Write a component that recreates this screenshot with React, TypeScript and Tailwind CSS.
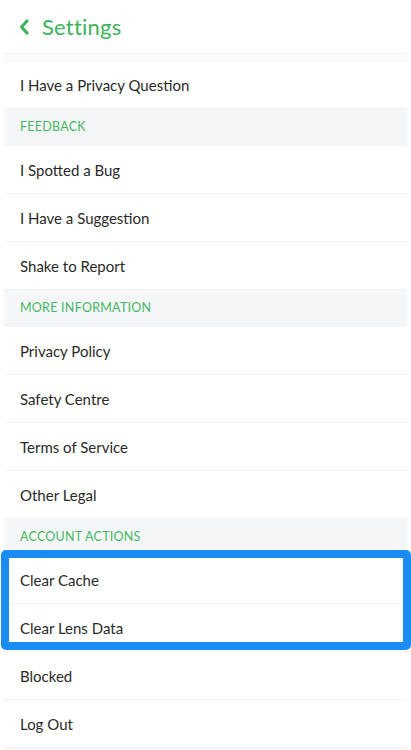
import React from 'react';

type Row = { kind: 'item' | 'section'; label: string };

const rows: Row[] = [
  { kind: 'item', label: 'I Have a Privacy Question' },
  { kind: 'section', label: 'FEEDBACK' },
  { kind: 'item', label: 'I Spotted a Bug' },
  { kind: 'item', label: 'I Have a Suggestion' },
  { kind: 'item', label: 'Shake to Report' },
  { kind: 'section', label: 'MORE INFORMATION' },
  { kind: 'item', label: 'Privacy Policy' },
  { kind: 'item', label: 'Safety Centre' },
  { kind: 'item', label: 'Terms of Service' },
  { kind: 'item', label: 'Other Legal' },
  { kind: 'section', label: 'ACCOUNT ACTIONS' },
];

function Item({ label }: { label: string }) {
  return (
    <div className="flex h-12 items-center border-b border-[#f1f2f4] px-4 pt-px text-[15px] text-[#2a2a2a]">
      {label}
    </div>
  );
}

function Section({ label }: { label: string }) {
  return (
    <div className="flex h-[37px] items-center bg-[#f5f6f8] px-4 text-[12.5px] tracking-[0.02em] text-[#45b863]">
      {label}
    </div>
  );
}

export default function App() {
  return (
    <div className="h-[750px] w-[411px] overflow-hidden bg-white" style={{ fontFamily: 'Lato, "Open Sans", sans-serif' }}>
      <header className="flex h-[53px] items-center gap-3 px-4">
        <svg width="12" height="18" viewBox="0 0 12 18" className="ml-0.5">
          <path d="M9 3 L3.5 9 L9 15" fill="none" stroke="#3cb45a" strokeWidth="3.2" strokeLinecap="round" strokeLinejoin="round" />
        </svg>
        <h1 className="text-[22px] tracking-[0.01em] text-[#3cb45a]">Settings</h1>
      </header>
      <div className="mx-1 h-2 border-y border-[#f1f2f4] bg-[#fbfbfc]" />
      <div className="mx-1">
        {rows.map((r) =>
          r.kind === 'section' ? <Section key={r.label} label={r.label} /> : <Item key={r.label} label={r.label} />
        )}
        <div className="relative">
          <Item label="Clear Cache" />
          <Item label="Clear Lens Data" />
          <div className="pointer-events-none absolute -left-[3px] -right-[4px] -top-[6px] bottom-[2px] rounded-[5px] border-[8px] border-[#1a8cf3]" />
        </div>
        <Item label="Blocked" />
        <Item label="Log Out" />
        <div className="h-3 bg-[#f5f6f8]" />
      </div>
    </div>
  );
}
